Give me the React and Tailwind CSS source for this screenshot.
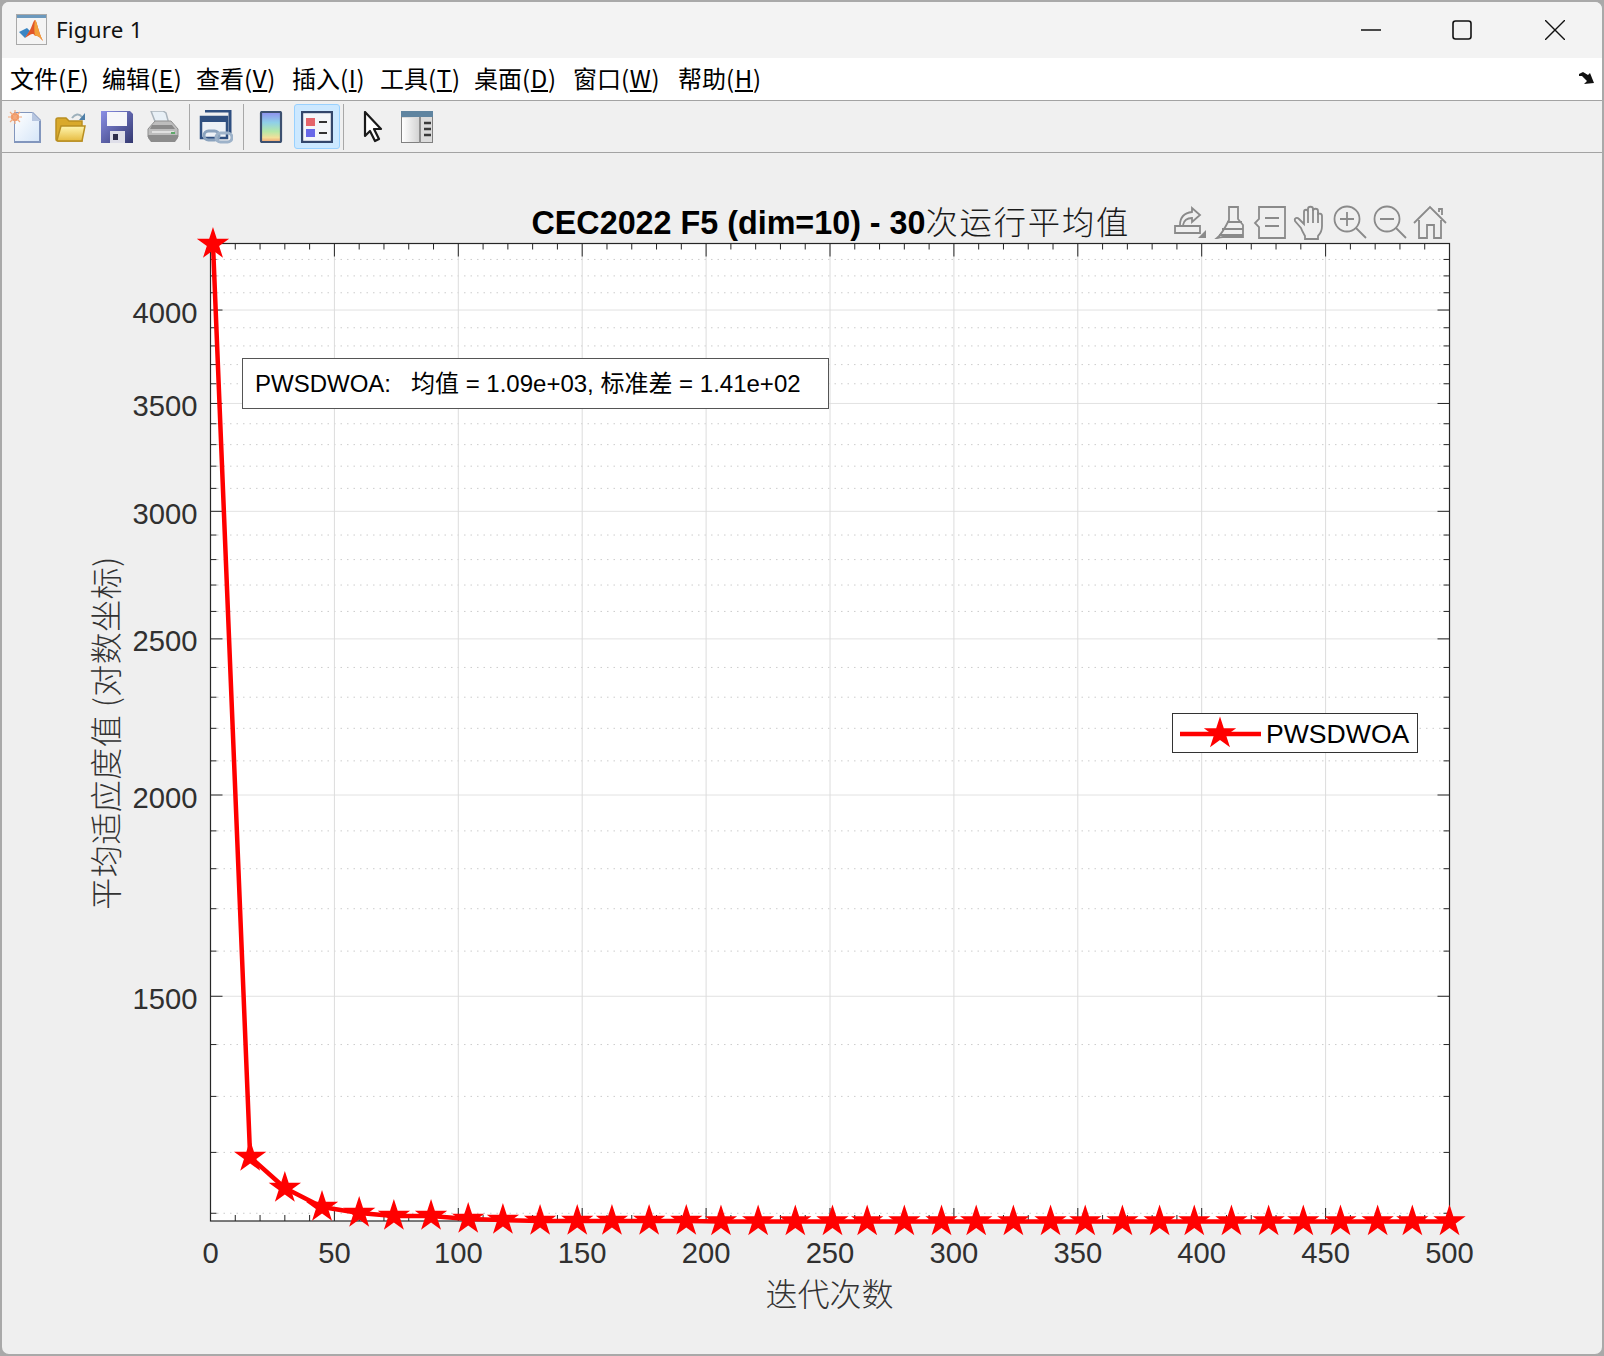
const X0 = 210.5;
const PX_PER_UNIT = 2.478;
const xOf = (v) => X0 + v * PX_PER_UNIT;
const yOf = (v) => 795 - 1611 * Math.log10(v / 2000);

const AX = { left: 210.5, right: 1449.5, top: 243.5, bottom: 1221 };
const OFFSET_Y = 153;

const xMajor = [0, 50, 100, 150, 200, 250, 300, 350, 400, 450, 500];
const xMinor = Array.from({ length: 51 }, (_, i) => i * 10).filter((v) => v % 50 !== 0);
const yMajor = [1500, 2000, 2500, 3000, 3500, 4000];
const yMinor = [1100, 1200, 1300, 1400, 1600, 1700, 1800, 1900, 2100, 2200, 2300, 2400, 2600, 2700, 2800, 2900, 3100, 3200, 3300, 3400, 3600, 3700, 3800, 3900, 4100, 4200, 4300];

const topYs = [244, 1157, 1188, 1207, 1213, 1216, 1216, 1219, 1220];
const markers = Array.from({ length: 35 }, (_, i) => {
  const iter = Math.round(1 + (i * 499) / 34);
  return { x: xOf(iter), y: i < topYs.length ? topYs[i] : i < 14 ? 1221 : 1221.5 };
});

const starPoints = (cx, cy, R = 17) => {
  const r = R * 0.382;
  const pts = [];
  for (let i = 0; i < 10; i++) {
    const rad = i % 2 === 0 ? R : r;
    const a = (-90 + i * 36) * (Math.PI / 180);
    pts.push(`${(cx + rad * Math.cos(a)).toFixed(2)},${(cy + rad * Math.sin(a)).toFixed(2)}`);
  }
  return pts.join(' ');
};

const cjk = '"Noto Sans CJK SC", "Liberation Sans", sans-serif';
const arial = '"Liberation Sans", Arial, sans-serif';

const Chart = () => (
  <svg width="1600" height="1201" viewBox={`0 ${OFFSET_Y} 1600 1201`} className="block overflow-visible">
    <rect x={AX.left} y={AX.top} width={AX.right - AX.left} height={AX.bottom - AX.top} fill="#fff" />

    {/* grid */}
    {yMinor.map((v) => (
      <line key={v} x1={AX.left} x2={AX.right} y1={yOf(v)} y2={yOf(v)} stroke="#cccccc" strokeWidth="1" strokeDasharray="1.5 5" />
    ))}
    {yMajor.map((v) => (
      <line key={v} x1={AX.left} x2={AX.right} y1={yOf(v)} y2={yOf(v)} stroke="#e2e2e2" strokeWidth="1" />
    ))}
    {xMajor.slice(1, -1).map((v) => (
      <line key={v} x1={xOf(v)} x2={xOf(v)} y1={AX.top} y2={AX.bottom} stroke="#dcdcdc" strokeWidth="1" />
    ))}

    {/* ticks */}
    {xMajor.map((v) => (
      <g key={v} stroke="#262626" strokeWidth="1">
        <line x1={xOf(v)} x2={xOf(v)} y1={AX.top} y2={AX.top + 13} />
        <line x1={xOf(v)} x2={xOf(v)} y1={AX.bottom} y2={AX.bottom - 13} />
      </g>
    ))}
    {xMinor.map((v) => (
      <g key={v} stroke="#262626" strokeWidth="1">
        <line x1={xOf(v)} x2={xOf(v)} y1={AX.top} y2={AX.top + 6} />
        <line x1={xOf(v)} x2={xOf(v)} y1={AX.bottom} y2={AX.bottom - 6} />
      </g>
    ))}
    {yMajor.map((v) => (
      <g key={v} stroke="#262626" strokeWidth="1">
        <line x1={AX.left} x2={AX.left + 12} y1={yOf(v)} y2={yOf(v)} />
        <line x1={AX.right} x2={AX.right - 12} y1={yOf(v)} y2={yOf(v)} />
      </g>
    ))}
    {yMinor.map((v) => (
      <g key={v} stroke="#262626" strokeWidth="1">
        <line x1={AX.left} x2={AX.left + 6} y1={yOf(v)} y2={yOf(v)} />
        <line x1={AX.right} x2={AX.right - 6} y1={yOf(v)} y2={yOf(v)} />
      </g>
    ))}
    <rect x={AX.left} y={AX.top} width={AX.right - AX.left} height={AX.bottom - AX.top} fill="none" stroke="#262626" strokeWidth="1.2" />

    {/* tick labels */}
    <g fontFamily={arial} fontSize="29.2" fill="#303030">
      {xMajor.map((v) => (
        <text key={v} x={xOf(v)} y="1263" textAnchor="middle">{v}</text>
      ))}
      {yMajor.map((v) => (
        <text key={v} x="197.5" y={yOf(v) + 12.5} textAnchor="end">{v}</text>
      ))}
    </g>

    {/* title and axis labels */}
    <text x="531.5" y="233.5" fontFamily={arial} fontSize="32.3" fontWeight="700" fill="#000">
      CEC2022 F5 (dim=10) - 30
      <tspan fontFamily={cjk} fontWeight="300" letterSpacing="1.8" fill="#1a1a1a">次运行平均值</tspan>
    </text>
    <text x="829.5" y="1306" textAnchor="middle" fontFamily={cjk} fontSize="32" fontWeight="300" fill="#333">迭代次数</text>
    <text transform="translate(118 733) rotate(-90)" textAnchor="middle" fontFamily={cjk} fontSize="32" fontWeight="300" letterSpacing="0.5" fill="#333">
      平均适应度值 (对数坐标)
    </text>

    {/* series */}
    <polyline points={markers.map((m) => `${m.x},${m.y}`).join(' ')} fill="none" stroke="#ff0000" strokeWidth="4.5" strokeLinejoin="round" />
    {markers.map((m, i) => (
      <polygon key={i} points={starPoints(m.x, m.y)} fill="#ff0000" />
    ))}
  </svg>
);

const AxesToolbar = () => (
  <div className="absolute left-[1172px] top-[51px] flex">
    <svg width="276" height="36" viewBox="1172 204 276 36" fill="none" stroke="#8a8a8a" strokeWidth="1.8">
      {/* export */}
      <path d="M1175 226h25v7h-25z" />
      <path d="M1180 225c0-8 4-12 12-13v-4l8 7-8 7v-4c-5 0-8 2-9 7" />
      <path d="M1206 230v8h-8z" fill="#8a8a8a" stroke="none" />
      {/* brush */}
      <path d="M1229 207h9v12l5 6v12h-20c-2 0-4 1-6 1 4-3 8-10 12-18z" />
      <path d="M1227 222h15M1222 229h21M1219 235h24" />
      {/* data tips */}
      <path d="M1259 207h26v31h-26v-11l-4-4 4-4z" />
      <path d="M1265 218h14M1265 226h14" />
      {/* pan */}
      <path d="M1301 228l-6-7c-1-3 2-4 4-2l5 5v-12c0-3 4-3 4 0v-3c0-3 5-3 5 0v2c0-3 5-3 5 0v4c0-2 4-2 4 1v10c0 5-2 8-4 10v3h-13v-3c-1-2-3-5-4-8z" />
      <path d="M1308 212v11M1313 209v14M1318 212v11" />
      {/* zoom in */}
      <circle cx="1347" cy="219" r="12.5" />
      <path d="M1356 228l10 10M1347 212v14M1340 219h14" />
      {/* zoom out */}
      <circle cx="1387" cy="219" r="12.5" />
      <path d="M1396 228l10 10M1380 219h14" />
      {/* home */}
      <path d="M1414 223l16-16 16 16M1419 220v18h8v-13h7v13h7v-18M1439 212v-3h3v6" />
    </svg>
  </div>
);

const MatlabIcon = () => (
  <svg width="32" height="32" viewBox="0 0 32 32" className="shrink-0">
    <rect x="0.5" y="0.5" width="30" height="30" fill="#f4f4f4" stroke="#a9a9a9" />
    <rect x="1" y="1" width="29" height="3" fill="#6c99bd" />
    <path d="M3 18l8-4 3 3-5 7z" fill="#3b86c4" />
    <path d="M9 24l5-8c2-3 3-9 5-10 2 1 3 11 8 21-3-3-5-6-8-5-2-4-5-1-10 2z" fill="#e0562a" />
    <path d="M19 6c2 1 3 11 8 21-3-3-5-6-8-5-1-5-1-11 0-16z" fill="#f3a03a" />
  </svg>
);

const NewIcon = () => (
  <svg width="34" height="34" viewBox="0 0 34 34">
    <defs>
      <linearGradient id="newg" x1="0" y1="0" x2="1" y2="1"><stop offset="0" stopColor="#ffffff" /><stop offset="1" stopColor="#d6e6f8" /></linearGradient>
    </defs>
    <path d="M6 2h19l8 8v23H6z" fill="#8296bd" />
    <path d="M7 3h17l7 8v20H7z" fill="url(#newg)" />
    <path d="M24 2v9h9z" fill="#b7c6e0" />
    <circle cx="7" cy="7" r="4" fill="#ee8a52" />
    <path d="M7 0v14M0 7h14M2 2l10 10M12 2L2 12" stroke="#f3a97c" strokeWidth="1.2" />
  </svg>
);

const OpenIcon = () => (
  <svg width="32" height="32" viewBox="0 0 32 32">
    <defs>
      <linearGradient id="openg" x1="0" y1="0" x2="0" y2="1"><stop offset="0" stopColor="#fff6b0" /><stop offset="1" stopColor="#e6bb40" /></linearGradient>
    </defs>
    <path d="M17 7c3-4 7-5 10-1" fill="none" stroke="#9db0bb" strokeWidth="2" />
    <path d="M30 2v7h-6z" fill="#4f7fa8" />
    <path d="M1 9c0-1 1-2 2-2h8l3 3h13v20H3c-1 0-2-1-2-2z" fill="#d9a92c" stroke="#b98f22" strokeWidth="1.5" />
    <path d="M2 29l4-14h24l-3 15H3z" fill="url(#openg)" stroke="#b98f22" strokeWidth="1.5" />
  </svg>
);

const SaveIcon = () => (
  <svg width="32" height="32" viewBox="0 0 32 32">
    <defs>
      <linearGradient id="saveg" x1="0" y1="0" x2="1" y2="1"><stop offset="0" stopColor="#8a8fe6" /><stop offset="1" stopColor="#33386f" /></linearGradient>
    </defs>
    <path d="M0 0h29l3 3v29H0z" fill="url(#saveg)" />
    <rect x="6" y="1" width="20" height="14" fill="#f6f6fa" />
    <rect x="9" y="20" width="15" height="12" fill="#dedee8" />
    <rect x="12" y="23" width="5" height="6" fill="#2e2e4a" />
  </svg>
);

const PrintIcon = () => (
  <svg width="32" height="32" viewBox="0 0 32 32">
    <path d="M4 0h12l3 2 3 11H9z" fill="#e8f0f6" stroke="#aab4bc" strokeWidth="1.5" />
    <path d="M1 18l7-8h16l7 8v8H1z" fill="#bdbdbd" stroke="#8f8f8f" />
    <path d="M5 14h20l3 4H3z" fill="#8a8a8a" />
    <path d="M1 24h30v3l-3 4H4l-3-4z" fill="#8c8c8c" />
    <rect x="5" y="20" width="22" height="2" fill="#e0e0e0" />
    <rect x="24" y="21" width="4" height="2" fill="#5fa86a" />
  </svg>
);

const LinkIcon = () => (
  <svg width="34" height="34" viewBox="0 0 34 34">
    <path d="M6 1h25v22" fill="none" stroke="#2f4f80" strokeWidth="3" />
    <rect x="2" y="7" width="26" height="21" fill="#edf1f6" stroke="#2f4f80" strokeWidth="2.5" />
    <rect x="2" y="7" width="26" height="5" fill="#2f4f80" />
    <rect x="5" y="21" width="15" height="9" rx="4.5" fill="none" stroke="#8ba3be" strokeWidth="3" />
    <rect x="17" y="23" width="16" height="9" rx="4.5" fill="none" stroke="#9db2c9" strokeWidth="3" />
  </svg>
);

const ColorbarIcon = () => (
  <svg width="24" height="32" viewBox="0 0 24 32">
    <defs>
      <linearGradient id="cbarg" x1="0" y1="0" x2="0" y2="1">
        <stop offset="0" stopColor="#8f8ff0" />
        <stop offset="0.35" stopColor="#8fd0e8" />
        <stop offset="0.65" stopColor="#b5e8a8" />
        <stop offset="0.85" stopColor="#f2e09a" />
        <stop offset="1" stopColor="#f0a070" />
      </linearGradient>
    </defs>
    <rect x="2" y="1" width="20" height="30" rx="1" fill="url(#cbarg)" stroke="#3c5070" strokeWidth="2.2" />
  </svg>
);

const LegendIcon = () => (
  <svg width="32" height="32" viewBox="0 0 32 32">
    <rect x="1" y="1" width="30" height="30" fill="#f4f6f9" stroke="#33466b" strokeWidth="2.4" />
    <rect x="5" y="7" width="9" height="8" fill="#e5646a" />
    <rect x="5" y="18" width="9" height="8" fill="#6868e8" />
    <path d="M18 11h8M18 22h8" stroke="#333" strokeWidth="2.2" />
  </svg>
);

const PointerIcon = () => (
  <svg width="20" height="32" viewBox="0 0 20 32">
    <path d="M2 1v24l5-5 5 10 4-2-5-10h7z" fill="#fff" stroke="#1a1a1a" strokeWidth="2.2" strokeLinejoin="round" />
  </svg>
);

const PlotToolsIcon = () => (
  <svg width="32" height="32" viewBox="0 0 32 32">
    <defs>
      <linearGradient id="paneg" x1="0" y1="0" x2="1" y2="0"><stop offset="0" stopColor="#ffffff" /><stop offset="1" stopColor="#d4d4d4" /></linearGradient>
    </defs>
    <rect x="0.5" y="0.5" width="31" height="31" fill="#dcdcdc" stroke="#808080" />
    <rect x="0" y="0" width="32" height="6" fill="#5f84a0" />
    <rect x="1" y="7" width="17" height="24" fill="url(#paneg)" />
    <rect x="18" y="6" width="2" height="26" fill="#8f8f8f" />
    <path d="M23 12h7M23 18h7M23 24h7" stroke="#3a3a3a" strokeWidth="2.4" />
  </svg>
);

const Separator = ({ className }) => <div className={`w-px h-[46px] bg-[#a8a8a8] ${className}`} />;

const ToolButton = ({ active, className = 'w-[46px]', children }) => (
  <div
    className={`flex h-[45px] items-center justify-center rounded-[3px] border ${className} ${
      active ? 'bg-[#cce8ff] border-[#99d1ff]' : 'border-transparent'
    }`}
  >
    <div className="blur-[0.5px]">{children}</div>
  </div>
);

const menus = [
  { a: '文件', k: 'F', w: 'w-[92px]' },
  { a: '编辑', k: 'E', w: 'w-[94px]' },
  { a: '查看', k: 'V', w: 'w-[96px]' },
  { a: '插入', k: 'I', w: 'w-[88px]' },
  { a: '工具', k: 'T', w: 'w-[94px]' },
  { a: '桌面', k: 'D', w: 'w-[99px]' },
  { a: '窗口', k: 'W', w: 'w-[105px]' },
  { a: '帮助', k: 'H', w: 'w-[84px]' },
];

export default function App() {
  return (
    <div className="w-[1604px] h-[1356px] bg-[#a9a9a9] overflow-hidden">
      <div className="flex h-full flex-col overflow-hidden rounded-[9px] border-2 border-[#a9a9a9] bg-[#efefef]">
        {/* title bar */}
        <div className="flex h-[56px] shrink-0 items-center bg-[#f3f3f3] pl-[14px]">
          <MatlabIcon />
          <span className="ml-[8px] text-[22.4px] tracking-[0.2px] text-[#111] font-['Noto_Sans','Liberation_Sans',sans-serif]">Figure 1</span>
          <div className="ml-auto flex items-center pr-[37px]">
            <svg width="20" height="20" viewBox="0 0 20 20"><path d="M0 10h20" stroke="#111" strokeWidth="1.6" /></svg>
            <svg className="ml-[71px]" width="20" height="20" viewBox="0 0 20 20" fill="none"><rect x="1" y="1" width="18" height="18" rx="2.5" stroke="#111" strokeWidth="1.6" /></svg>
            <svg className="ml-[73px]" width="20" height="20" viewBox="0 0 20 20"><path d="M0 0l20 20M20 0L0 20" stroke="#111" strokeWidth="1.4" /></svg>
          </div>
        </div>

        {/* menu bar */}
        <div className="flex h-[43px] shrink-0 items-center justify-between border-b border-[#a3a3a3] bg-white pb-[2px] pl-[8px] pr-[7px]">
          <div className="flex text-[24px] leading-none text-black font-['Noto_Sans_CJK_SC','Noto_Sans',sans-serif]">
            {menus.map(({ a, k, w }) => (
              <span key={k} className={w}>
                {a}
                <span className="tracking-[0.7px]">(</span>
                <span className="underline underline-offset-2 tracking-[0.7px]">{k}</span>)
              </span>
            ))}
          </div>
          <svg width="16" height="14" viewBox="0 0 16 14">
            <path d="M0 3l4-2 5 3 2-2 4 10-10 1 3-3-5-5-3 0z" fill="#111" />
          </svg>
        </div>

        {/* toolbar */}
        <div className="flex h-[52px] shrink-0 items-center border-b border-[#a3a3a3] bg-[#f0f0f0]">
          <ToolButton><NewIcon /></ToolButton>
          <ToolButton><OpenIcon /></ToolButton>
          <ToolButton><SaveIcon /></ToolButton>
          <ToolButton><PrintIcon /></ToolButton>
          <Separator className="mx-[3px]" />
          <ToolButton><LinkIcon /></ToolButton>
          <Separator className="mx-[4px]" />
          <ToolButton><ColorbarIcon /></ToolButton>
          <ToolButton active><LegendIcon /></ToolButton>
          <Separator className="ml-[3px] mr-[4px]" />
          <ToolButton className="w-[50px]"><PointerIcon /></ToolButton>
          <ToolButton className="w-[38px]"><PlotToolsIcon /></ToolButton>
        </div>

        {/* figure */}
        <div className="relative flex-1 -ml-[2px]">
          <Chart />
          <AxesToolbar />
          <div className="absolute left-[242px] top-[205px] flex h-[51px] w-[587px] items-center border-[1.5px] border-[#555] bg-white pl-[12px] text-[24px] text-black whitespace-pre font-['Liberation_Sans','Noto_Sans_CJK_SC',sans-serif]">
            {'PWSDWOA:   均值 = 1.09e+03, 标准差 = 1.41e+02'}
          </div>
          <div className="absolute left-[1172px] top-[560px] flex h-[40px] w-[246px] items-center border-[1.5px] border-[#333] bg-white">
            <svg width="88" height="36" viewBox="0 0 88 36" className="shrink-0 overflow-visible">
              <path d="M7 19h81" stroke="#ff0000" strokeWidth="4.5" />
              <polygon points={starPoints(47, 18.5)} fill="#ff0000" />
            </svg>
            <span className="ml-[5px] pt-[3px] text-[26.6px] text-black font-['Liberation_Sans',sans-serif]">PWSDWOA</span>
          </div>
        </div>
      </div>
    </div>
  );
}
